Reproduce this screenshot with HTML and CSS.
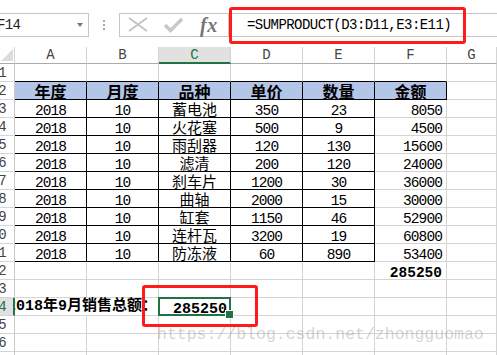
FILE: index.html
```html
<!DOCTYPE html>
<html lang="zh-CN">
<head>
<meta charset="utf-8">
<title>SUMPRODUCT</title>
<link rel="stylesheet" href="styles.css">
</head>
<body>
<div class="page">
  <div class="toolbar">
    <div class="namebox"><span class="name">F14</span><span class="caret"></span></div>
    <div class="grip"><i></i><i></i><i></i></div>
    <div class="btns">
      <svg class="btn-icons" width="70" height="22" viewBox="0 0 70 22">
        <path d="M9 4 L27 17 M27 4 L9 17" stroke="#c4c4c4" stroke-width="2" fill="none"/>
        <path d="M45 11 L50.5 16.5 L62 5" stroke="#c8c8c8" stroke-width="3.5" fill="none"/>
      </svg>
      <span class="fx">fx</span>
    </div>
    <div class="formula">=SUMPRODUCT(D3:D11,E3:E11)</div>
  </div>

  <div class="sheet">
    <div class="c corner"><span class="tri"></span></div>
    <div class="c ch">A</div><div class="c ch">B</div><div class="c ch chsel">C</div><div class="c ch">D</div><div class="c ch">E</div><div class="c ch">F</div><div class="c ch">G</div>

    <div class="c rh">1</div>
    <div class="c bt"></div><div class="c bt"></div><div class="c bt"></div><div class="c bt"></div><div class="c bt"></div><div class="c bt"></div><div class="c"></div>

    <div class="c rh">2</div>
    <div class="c b hd">年度</div><div class="c b hd">月度</div><div class="c b hd">品种</div><div class="c b hd">单价</div><div class="c b hd">数量</div><div class="c b hd">金额</div><div class="c"></div>

    <div class="c rh">3</div>
    <div class="c b">2018</div><div class="c b">10</div><div class="c b zh">蓄电池</div><div class="c b">350</div><div class="c b">23</div><div class="c r">8050</div><div class="c"></div>

    <div class="c rh">4</div>
    <div class="c b">2018</div><div class="c b">10</div><div class="c b zh">火花塞</div><div class="c b">500</div><div class="c b">9</div><div class="c r">4500</div><div class="c"></div>

    <div class="c rh">5</div>
    <div class="c b">2018</div><div class="c b">10</div><div class="c b zh">雨刮器</div><div class="c b">120</div><div class="c b">130</div><div class="c r">15600</div><div class="c"></div>

    <div class="c rh">6</div>
    <div class="c b">2018</div><div class="c b">10</div><div class="c b zh">滤清</div><div class="c b">200</div><div class="c b">120</div><div class="c r">24000</div><div class="c"></div>

    <div class="c rh">7</div>
    <div class="c b">2018</div><div class="c b">10</div><div class="c b zh">刹车片</div><div class="c b">1200</div><div class="c b">30</div><div class="c r">36000</div><div class="c"></div>

    <div class="c rh">8</div>
    <div class="c b">2018</div><div class="c b">10</div><div class="c b zh">曲轴</div><div class="c b">2000</div><div class="c b">15</div><div class="c r">30000</div><div class="c"></div>

    <div class="c rh">9</div>
    <div class="c b">2018</div><div class="c b">10</div><div class="c b zh">缸套</div><div class="c b">1150</div><div class="c b">46</div><div class="c r">52900</div><div class="c"></div>

    <div class="c rh">10</div>
    <div class="c b">2018</div><div class="c b">10</div><div class="c b zh">连杆瓦</div><div class="c b">3200</div><div class="c b">19</div><div class="c r">60800</div><div class="c"></div>

    <div class="c rh">11</div>
    <div class="c b">2018</div><div class="c b">10</div><div class="c b zh">防冻液</div><div class="c b">60</div><div class="c b">890</div><div class="c r">53400</div><div class="c"></div>

    <div class="c rh">12</div>
    <div class="c"></div><div class="c"></div><div class="c"></div><div class="c"></div><div class="c"></div><div class="c r bold">285250</div><div class="c"></div>

    <div class="c rh">13</div>
    <div class="c"></div><div class="c"></div><div class="c"></div><div class="c"></div><div class="c"></div><div class="c"></div><div class="c"></div>

    <div class="c rh rhsel">14</div>
    <div class="c nogrid"></div><div class="c over">2018年9月销售总额：</div><div class="c r bold sel">285250</div><div class="c"></div><div class="c"></div><div class="c"></div><div class="c"></div>

    <div class="c rh">15</div>
    <div class="c"></div><div class="c"></div><div class="c"></div><div class="c"></div><div class="c"></div><div class="c"></div><div class="c"></div>

    <div class="c rh">16</div>
    <div class="c"></div><div class="c"></div><div class="c"></div><div class="c"></div><div class="c"></div><div class="c"></div><div class="c"></div>

    <div class="c rh">17</div>
    <div class="c"></div><div class="c"></div><div class="c"></div><div class="c"></div><div class="c"></div><div class="c"></div><div class="c"></div>
  </div>

  <div class="mark mark-formula"></div>
  <div class="mark mark-cell"></div>
  <div class="watermark">https://blog.csdn.net/zhongguomao</div>
</div>
</body>
</html>
```
FILE: styles.css
```css
* { box-sizing: border-box; margin: 0; padding: 0; }
html, body { width: 497px; height: 355px; overflow: hidden; background: #fff; }
body { font-family: "Liberation Mono", "Noto Sans CJK SC", monospace; color: #000; }
.page { position: relative; width: 497px; height: 355px; overflow: hidden; }

/* formula bar */
.toolbar { height: 47px; display: flex; align-items: flex-start; padding-top: 13px; }
.namebox {
  width: 89px; height: 24px; border: 1px solid #c6c6c6; border-left: none;
  display: flex; align-items: center; justify-content: space-between; padding-right: 5px;
}
.name { margin-left: -3px; font-size: 14px; letter-spacing: -0.6px; color: #222; }
.caret {
  width: 0; height: 0; margin-top: -1px;
  border-left: 3.5px solid transparent; border-right: 3.5px solid transparent;
  border-top: 4px solid #777;
}
.grip { width: 30px; display: flex; flex-direction: column; align-items: center; gap: 2px; padding-top: 7px; }
.grip i { display: block; width: 2px; height: 2px; background: #a8a8a8; }
.btns {
  width: 110px; height: 24px; border: 1px solid #c6c6c6;
  display: flex; align-items: center;
}
.btn-icons { display: block; }
.fx {
  margin-left: 10px; font-family: "Liberation Serif", serif; font-style: italic; font-weight: 700;
  font-size: 20px; color: #767676; line-height: 22px; letter-spacing: 0.5px;
}
.formula {
  flex: 1; height: 24px; border: 1px solid #c6c6c6; border-right: none;
  padding-left: 17px; font-size: 14px; letter-spacing: -0.55px; line-height: 22px; white-space: nowrap;
}

/* sheet */
.sheet {
  display: grid;
  grid-template-columns: 15px repeat(6, 72px) 50px;
  grid-template-rows: 17px repeat(17, 18px);
}
.c {
  border-right: 1px solid #d4d4d4; border-bottom: 1px solid #d4d4d4;
  display: flex; align-items: flex-start; justify-content: center;
  white-space: nowrap; font-size: 14.5px; letter-spacing: -0.9px; line-height: 11px;
  padding-top: 6px;
}
.corner { position: relative; border-bottom-color: #ababab; padding-top: 0; }
.tri {
  position: absolute; right: 1px; bottom: 2px; width: 0; height: 0;
  border-left: 12px solid transparent; border-bottom: 12px solid #dcdcdc;
}
.ch {
  align-items: center; padding-top: 0; line-height: 16px;
  border-bottom-color: #ababab; color: #444; font-size: 14px; letter-spacing: 0;
}
.chsel { background: #e1e1e1; color: #217346; border-bottom: 2px solid #217346; }
.rh {
  justify-content: flex-end; padding: 0 8px 0 0; overflow: hidden; color: #444;
  position: relative; z-index: 1; background: #fff; border-right-color: #c8c8c8;
  align-items: center; line-height: 16px; font-size: 14px; letter-spacing: -0.6px;
}
.rhsel { background: #e1e1e1; color: #217346; border-right: 2px solid #217346; padding-right: 7px; }

.bt { border-bottom-color: #000; }
.b { border-right-color: #000; border-bottom-color: #000; }
.hd {
  background: #b4c6e7; font-family: "Noto Sans CJK SC", sans-serif; font-weight: 700;
  font-size: 16px; letter-spacing: 0; line-height: 16px;
  align-items: flex-end; padding: 0;
}
.zh {
  font-family: "Noto Sans CJK SC", sans-serif; font-size: 15px; letter-spacing: 0; line-height: 15px;
  align-items: flex-end; padding: 0 0 1px 0;
}
.r { justify-content: flex-end; padding-right: 4px; }
.bold { font-weight: 700; letter-spacing: 0; }

.nogrid { border-right-color: transparent; }
.over {
  justify-content: flex-end; padding: 0 1px 1px 0; font-weight: 700; font-size: 15px;
  letter-spacing: 0; line-height: 15px; align-items: flex-end;
  background: #fff; border-right-color: transparent;
}
.sel { position: relative; font-size: 15px; padding-right: 3px; }
.sel::before {
  content: ""; position: absolute; left: -1px; top: -1px; right: -1px; bottom: -1px;
  border: 2px solid #217346; z-index: 2;
}
.sel::after {
  content: ""; position: absolute; right: -4px; bottom: -4px; width: 7px; height: 7px;
  background: #217346; border: 1px solid #fff; z-index: 3;
}

/* overlays */
.mark { position: absolute; border: 3px solid #ff1b1b; border-radius: 3px; z-index: 5; }
.mark-formula { left: 229px; top: 7px; width: 237px; height: 37px; }
.mark-cell { left: 142px; top: 285px; width: 116px; height: 42px; }
.watermark {
  position: absolute; left: 157px; top: 325px; z-index: 6;
  font-family: "Liberation Mono", monospace; font-size: 16.5px; line-height: 20px;
  color: rgba(150, 150, 150, 0.42); white-space: nowrap;
}
```
